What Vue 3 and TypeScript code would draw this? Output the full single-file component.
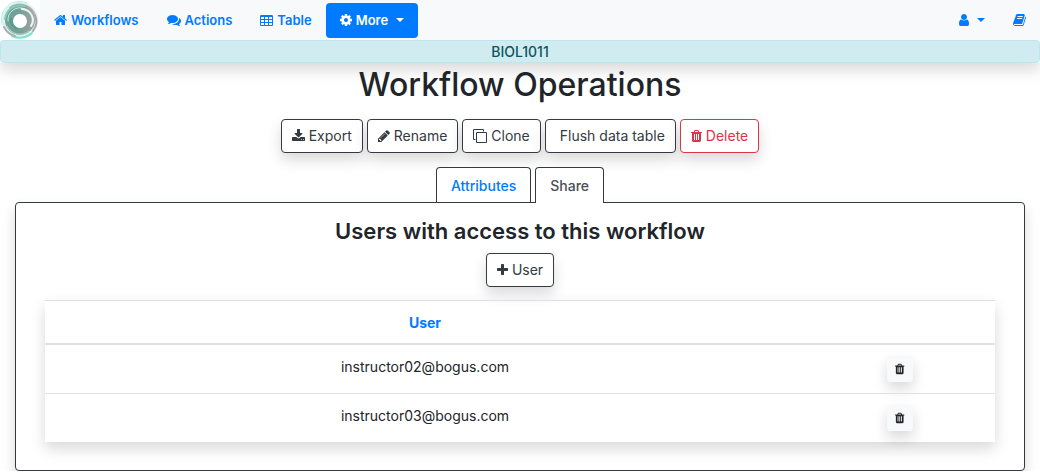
<script setup lang="ts">
import { h } from 'vue'

interface Glyph {
  width: number
  path: string
}

const glyphs: Record<string, Glyph> = {
  home: {
    width: 13,
    path: 'M1472 992v480q0 26-19 45t-45 19h-384v-384h-256v384h-384q-26 0-45-19t-19-45v-480q0-1 .5-3t.5-3l575-474 575 474q1 2 1 6zm223-69l-62 74q-8 9-21 11h-3q-13 0-21-7l-692-577-692 577q-12 8-24 7-13-2-21-11l-62-74q-8-10-7-23.5t11-21.5l719-599q32-26 76-26t76 26l244 204v-195q0-14 9-23t23-9h192q14 0 23 9t9 23v408l219 182q10 8 11 21.5t-7 23.5z',
  },
  comments: {
    width: 14,
    path: 'M1408 768q0 139-94 257t-256.5 186.5-353.5 68.5q-86 0-176-16-124 88-278 128-36 9-86 16h-3q-11 0-20.5-8t-11.5-21q-1-3-1-6.5t.5-6.5 2-6l2.5-5 3.5-5.5 4-5 4.5-5 4-4.5q5-6 23-25t26-29.5 22.5-29 25-38.5 20.5-44q-124-72-195-177t-71-224q0-139 94-257t256.5-186.5 353.5-68.5 353.5 68.5 256.5 186.5 94 257zm384 256q0 120-71 224.5t-195 176.5q10 24 20.5 44t25 38.5 22.5 29 26 29.5 23 25q1 1 4 4.5t4.5 5 4 5 3.5 5.5l2.5 5 2 6 .5 6.5-1 6.5q-3 14-13 22t-22 7q-50-7-86-16-154-40-278-128-90 16-176 16-271 0-472-132 58 4 88 4 161 0 309-45t264-129q125-92 192-212t67-254q0-77-23-152 129 71 204 178t75 230z',
  },
  table: {
    width: 13,
    path: 'M224 256h1344q66 0 113 47t47 113v1088q0 66-47 113t-113 47h-1344q-66 0-113-47t-47-113v-1088q0-66 47-113t113-47zM192 512v256h384v-256zM704 512v256h384v-256zM1216 512v256h384v-256zM192 896v256h384v-256zM704 896v256h384v-256zM1216 896v256h384v-256zM192 1280v256h384v-256zM704 1280v256h384v-256zM1216 1280v256h384v-256z',
  },
  cog: {
    width: 12,
    path: 'M1152 896q0-106-75-181t-181-75-181 75-75 181 75 181 181 75 181-75 75-181zm512-109v222q0 12-8 23t-20 13l-185 28q-19 54-39 91 35 50 107 138 10 12 10 25t-9 23q-27 37-99 108t-94 71q-12 0-26-9l-138-108q-44 23-91 38-16 136-29 186-7 28-36 28h-222q-14 0-24.5-8.5t-11.5-21.5l-28-184q-49-16-90-37l-141 107q-10 9-25 9-14 0-25-11-126-114-165-168-7-10-7-23 0-12 8-23 15-21 51-66.5t54-70.5q-27-50-41-99l-183-27q-13-2-21-12.5t-8-23.5v-222q0-12 8-23t19-13l186-28q14-46 39-92-40-57-107-138-10-12-10-24 0-10 9-23 26-36 98.5-107.5t94.5-71.5q13 0 26 10l138 107q44-23 91-38 16-136 29-186 7-28 36-28h222q14 0 24.5 8.5t11.5 21.5l28 184q49 16 90 37l142-107q9-9 24-9 13 0 25 10 129 119 165 170 7 8 7 22 0 12-8 23-15 21-51 66.5t-54 70.5q26 50 41 98l183 28q13 2 21 12.5t8 23.5z',
  },
  user: {
    width: 10,
    path: 'M1536 1399q0 109-62.5 187t-150.5 78h-854q-88 0-150.5-78t-62.5-187q0-85 8.5-160.5t31.5-152 58.5-131 94-89 134.5-34.5q131 128 313 128t313-128q76 0 134.5 34.5t94 89 58.5 131 31.5 152 8.5 160.5zm-256-887q0 159-112.5 271.5t-271.5 112.5-271.5-112.5-112.5-271.5 112.5-271.5 271.5-112.5 271.5 112.5 112.5 271.5z',
  },
  book: {
    width: 13,
    path: 'M1703 478q40 57 18 129l-275 906q-19 64-76.5 107.5t-122.5 43.5h-923q-77 0-148.5-53.5t-99.5-131.5q-24-67-2-127 0-4 3-27t4-37q1-8-3-21.5t-3-19.5q2-11 8-21t16.5-23.5 16.5-23.5q23-38 45-91.5t30-91.5q3-10 .5-30t-.5-28q3-11 17-28t17-23q21-36 42-92t25-90q1-9-2.5-32t.5-28q4-13 22-30.5t22-22.5q19-26 42.5-84.5t27.5-96.5q1-8-3-25.5t-2-26.5q2-8 9-18t18-23 17-21q8-12 16.5-30.5t15-35 16-36 19.5-32 26.5-23.5 36-11.5 47.5 5.5l-1 3q38-9 51-9h761q74 0 114 56t18 130l-274 906q-36 119-71.5 153.5t-128.5 34.5h-869q-27 0-38 15-11 16-1 43 24 70 144 70h923q29 0 56-15.5t35-41.5l300-987q7-22 5-57 38 15 59 43zm-1064 2q-4 13 2 22.5t20 9.5h608q13 0 25.5-9.5t16.5-22.5l21-64q4-13-2-22.5t-20-9.5h-608q-13 0-25.5 9.5t-16.5 22.5zm-83 256q-4 13 2 22.5t20 9.5h608q13 0 25.5-9.5t16.5-22.5l21-64q4-13-2-22.5t-20-9.5h-608q-13 0-25.5 9.5t-16.5 22.5z',
  },
  download: {
    width: 13,
    path: 'M1344 1344q0-26-19-45t-45-19-45 19-19 45 19 45 45 19 45-19 19-45zm256 0q0-26-19-45t-45-19-45 19-19 45 19 45 45 19 45-19 19-45zm128-224v320q0 40-28 68t-68 28h-1472q-40 0-68-28t-28-68v-320q0-40 28-68t68-28h465l135 136q58 56 136 56t136-56l136-136h464q40 0 68 28t28 68zm-325-569q17 41-14 70l-448 448q-18 19-45 19t-45-19l-448-448q-31-29-14-70 17-39 59-39h256v-448q0-26 19-45t45-19h256q26 0 45 19t19 45v448h256q42 0 59 39z',
  },
  pencil: {
    width: 12,
    path: 'M491 1536l91-91-235-235-91 91v107h128v128h107zm523-928q0-22-22-22-10 0-17 7l-542 542q-7 7-7 17 0 22 22 22 10 0 17-7l542-542q7-7 7-17zm-54-192l416 416-832 832h-416v-416zm683 96q0 53-37 90l-166 166-416-416 166-165q36-38 90-38 53 0 91 38l235 234q37 39 37 91z',
  },
  clone: {
    width: 14,
    path: 'M1664 1632v-1088q0-13-9.5-22.5t-22.5-9.5h-1088q-13 0-22.5 9.5t-9.5 22.5v1088q0 13 9.5 22.5t22.5 9.5h1088q13 0 22.5-9.5t9.5-22.5zm128-1088v1088q0 66-47 113t-113 47h-1088q-66 0-113-47t-47-113v-1088q0-66 47-113t113-47h1088q66 0 113 47t47 113zm-384-384v160h-128v-160q0-13-9.5-22.5t-22.5-9.5h-1088q-13 0-22.5 9.5t-9.5 22.5v1088q0 13 9.5 22.5t22.5 9.5h160v128h-160q-66 0-113-47t-47-113v-1088q0-66 47-113t113-47h1088q66 0 113 47t47 113z',
  },
  trash: {
    width: 11,
    path: 'M704 1376v-704q0-14-9-23t-23-9h-64q-14 0-23 9t-9 23v704q0 14 9 23t23 9h64q14 0 23-9t9-23zm256 0v-704q0-14-9-23t-23-9h-64q-14 0-23 9t-9 23v704q0 14 9 23t23 9h64q14 0 23-9t9-23zm256 0v-704q0-14-9-23t-23-9h-64q-14 0-23 9t-9 23v704q0 14 9 23t23 9h64q14 0 23-9t9-23zm-544-992h448l-48-117q-7-9-17-11h-317q-10 2-17 11zm928 32v64q0 14-9 23t-23 9h-96v948q0 83-47 143.5t-113 60.5h-832q-66 0-113-58.5t-47-141.5v-952h-96q-14 0-23-9t-9-23v-64q0-14 9-23t23-9h309l70-167q15-37 54-63t79-26h320q40 0 79 26t54 63l70 167h309q14 0 23 9t9 23z',
  },
  plus: {
    width: 11,
    path: 'M1600 736v192q0 40-28 68t-68 28h-416v416q0 40-28 68t-68 28h-192q-40 0-68-28t-28-68v-416h-416q-40 0-68-28t-28-68v-192q0-40 28-68t68-28h416v-416q0-40 28-68t68-28h192q40 0 68 28t28 68v416h416q40 0 68 28t28 68z',
  },
}

// Glyphs share a 1792-unit em square; narrow ones are cropped around its centre.
const Icon = (props: { name: string; size?: number }) => {
  const glyph = glyphs[props.name]
  const size = props.size ?? 14
  const units = glyph.width * 128
  return h(
    'svg',
    {
      width: (glyph.width * size) / 14,
      height: size,
      viewBox: `${(1792 - units) / 2} 0 ${units} 1792`,
      fill: 'currentColor',
      'fill-rule': 'evenodd',
      overflow: 'visible',
      'aria-hidden': 'true',
    },
    [h('path', { d: glyph.path })],
  )
}
Icon.props = ['name', 'size']

const links = [
  { label: 'Workflows', icon: 'home' },
  { label: 'Actions', icon: 'comments' },
  { label: 'Table', icon: 'table' },
]

const operations = [
  { label: 'Export', icon: 'download' },
  { label: 'Rename', icon: 'pencil' },
  { label: 'Clone', icon: 'clone' },
  { label: 'Flush data table', icon: '' },
  { label: 'Delete', icon: 'trash', danger: true },
]

const users = ['instructor02@bogus.com', 'instructor03@bogus.com']
</script>

<template>
  <div class="page">
    <header class="header">
      <nav class="navbar" aria-label="Main">
        <a class="brand" href="#" aria-label="Home">
          <svg width="40" height="40" viewBox="0 0 40 40" aria-hidden="true">
            <defs>
              <linearGradient id="ring" x1="0" y1="0" x2="1" y2="0">
                <stop offset="0" stop-color="#6fa398" />
                <stop offset="0.5" stop-color="#76a098" />
                <stop offset="1" stop-color="#a3a3a3" />
              </linearGradient>
            </defs>
            <rect width="40" height="40" fill="#fff" />
            <circle cx="20" cy="20" r="18" fill="#dff1ee" />
            <circle cx="20" cy="20" r="15" fill="url(#ring)" />
            <g fill="none" stroke-linecap="round">
              <path d="M2 24A18 18 0 0 1 27 3" stroke="#b4efe2" />
              <path d="M32 33A18 18 0 0 1 12 36" stroke="#7fe3cb" stroke-width="2" />
              <path d="M4 27A17 17 0 0 0 15 36" stroke="#a9b3b1" stroke-width="2" />
              <path d="M10 8A16 16 0 0 1 34 13" stroke="#a9aeae" stroke-width="2" />
              <path d="M35 15A16 16 0 0 1 33 31" stroke="#a7a7a7" stroke-width="2" />
              <path d="M5 19A15 15 0 0 1 24 6" stroke="#7ecdba" stroke-width="2" />
              <path d="M8 21A12 12 0 0 1 25 9" stroke="#c9e6df" />
              <path d="M7 26A14 14 0 0 0 29 31" stroke="#b9d3cd" />
              <path d="M22 9A11 11 0 0 1 31 26" stroke="#edf8f5" stroke-width="2" />
              <path d="M11 19A9 9 0 0 0 17 28" stroke="#579c8d" stroke-width="3" />
            </g>
            <circle cx="20" cy="21" r="7" fill="#fff" />
          </svg>
        </a>
        <a v-for="link in links" :key="link.label" class="nav-link" href="#">
          <Icon :name="link.icon" />{{ link.label }}
        </a>
        <button type="button" class="nav-link active" aria-haspopup="true">
          <Icon name="cog" />More<span class="caret"></span>
        </button>
        <div class="nav-end">
          <button type="button" class="nav-link" aria-label="Account" aria-haspopup="true">
            <Icon name="user" /><span class="caret"></span>
          </button>
          <a class="nav-link" href="#" aria-label="Documentation"><Icon name="book" /></a>
        </div>
      </nav>
      <div class="context">BIOL1011</div>
    </header>

    <main class="main">
      <h1>Workflow Operations</h1>

      <div class="operations">
        <button
          v-for="op in operations"
          :key="op.label"
          type="button"
          class="btn"
          :class="{ danger: op.danger, plain: !op.icon }"
        >
          <Icon v-if="op.icon" :name="op.icon" />{{ op.label }}
        </button>
      </div>

      <div class="tabs" role="tablist">
        <button type="button" class="tab" role="tab" aria-selected="false">Attributes</button>
        <button type="button" class="tab selected" role="tab" aria-selected="true">Share</button>
      </div>

      <section class="panel" role="tabpanel">
        <h2>Users with access to this workflow</h2>
        <button type="button" class="btn"><Icon name="plus" />User</button>
        <table class="users">
          <thead>
            <tr>
              <th class="user-col" scope="col">User</th>
              <td></td>
            </tr>
          </thead>
          <tbody>
            <tr v-for="user in users" :key="user">
              <td>{{ user }}</td>
              <td>
                <button type="button" class="remove" :aria-label="`Remove ${user}`">
                  <Icon name="trash" :size="12" />
                </button>
              </td>
            </tr>
          </tbody>
        </table>
      </section>
    </main>
  </div>
</template>

<style>
body {
  background: #fff;
}
</style>

<style scoped>
.page,
.page * {
  box-sizing: border-box;
}

.page {
  overflow-x: hidden;
  color: #212529;
  font-family: Inter, Roboto, sans-serif;
  font-size: 14px;
  line-height: 21px;
}

button {
  margin: 0;
  font: inherit;
  cursor: pointer;
}

svg {
  display: block;
  flex: none;
}

.header {
  box-shadow: 0 7px 14px rgba(0, 0, 0, 0.15);
}

.navbar {
  display: flex;
  align-items: center;
  background: #f8f9fa;
}

.nav-link {
  display: flex;
  align-items: center;
  gap: 4px;
  padding: 7px 14px;
  border: 0;
  border-radius: 4px;
  background: transparent;
  color: #007bff;
  font-size: 13px;
  font-weight: 600;
  text-decoration: none;
}

.nav-link.active {
  background: #007bff;
  color: #fff;
}

.nav-end {
  display: flex;
  align-items: center;
  margin-left: auto;
}

.nav-end .nav-link {
  min-height: 35px;
}

.caret {
  margin-left: 4px;
  border: 4px solid transparent;
  border-top-color: currentColor;
  border-bottom: 0;
}

.context {
  border: 1px solid #bee5eb;
  border-radius: 4px;
  background: #d1ecf1;
  color: #0c5460;
  font-weight: 500;
  text-align: center;
}

.main {
  display: flex;
  flex-direction: column;
  align-items: center;
  padding: 0 15px;
}

h1,
h2 {
  margin: 0;
  text-align: center;
}

h1 {
  font-size: 32px;
  font-weight: 500;
  line-height: 44px;
}

h2 {
  margin-bottom: 7px;
  font-size: 22px;
  font-weight: 600;
  line-height: 29px;
}

.operations {
  display: flex;
  flex-wrap: wrap;
  justify-content: center;
  gap: 4px;
  margin: 12px 0 14px;
}

.btn {
  display: flex;
  align-items: center;
  gap: 4px;
  padding: 5px 10px;
  border: 1px solid #343a40;
  border-radius: 4px;
  background: #fff;
  box-shadow: 0 7px 14px rgba(0, 0, 0, 0.15);
  color: #343a40;
  line-height: 22px;
}

.btn.plain {
  padding-left: 14px;
}

.btn.danger {
  border-color: #dc3545;
  color: #dc3545;
}

.tabs {
  display: flex;
  gap: 4px;
  z-index: 1;
}

.tab {
  padding: 7px 14px 6px;
  border: 1px solid #343a40;
  border-bottom: 0;
  border-radius: 4px 4px 0 0;
  background: #fff;
  color: #007bff;
  font-weight: 500;
}

.tab.selected {
  margin-bottom: -1px;
  padding-bottom: 7px;
  color: #495057;
}

.panel {
  display: flex;
  flex-direction: column;
  align-items: center;
  width: 100%;
  padding: 14px 29px 28px;
  border: 1px solid #343a40;
  border-radius: 4px;
  background: #fff;
  box-shadow: 0 7px 14px rgba(0, 0, 0, 0.15);
}

.users {
  width: 100%;
  margin-top: 13px;
  border-collapse: collapse;
  box-shadow: 0 7px 14px rgba(0, 0, 0, 0.15);
  text-align: center;
}

.users th,
.users td {
  padding: 11px;
  border-top: 1px solid #dee2e6;
  vertical-align: top;
}

.users thead th,
.users thead td {
  padding-bottom: 10px;
  border-bottom: 2px solid #dee2e6;
}

.users th {
  color: #007bff;
  font-weight: 700;
}

.user-col {
  width: 80%;
}

.remove {
  display: block;
  margin: 0 auto;
  padding: 7px 8px;
  border: 0;
  border-radius: 3px;
  background: #f8f9fa;
  box-shadow: 0 7px 14px rgba(0, 0, 0, 0.15);
  color: #212529;
}
</style>
